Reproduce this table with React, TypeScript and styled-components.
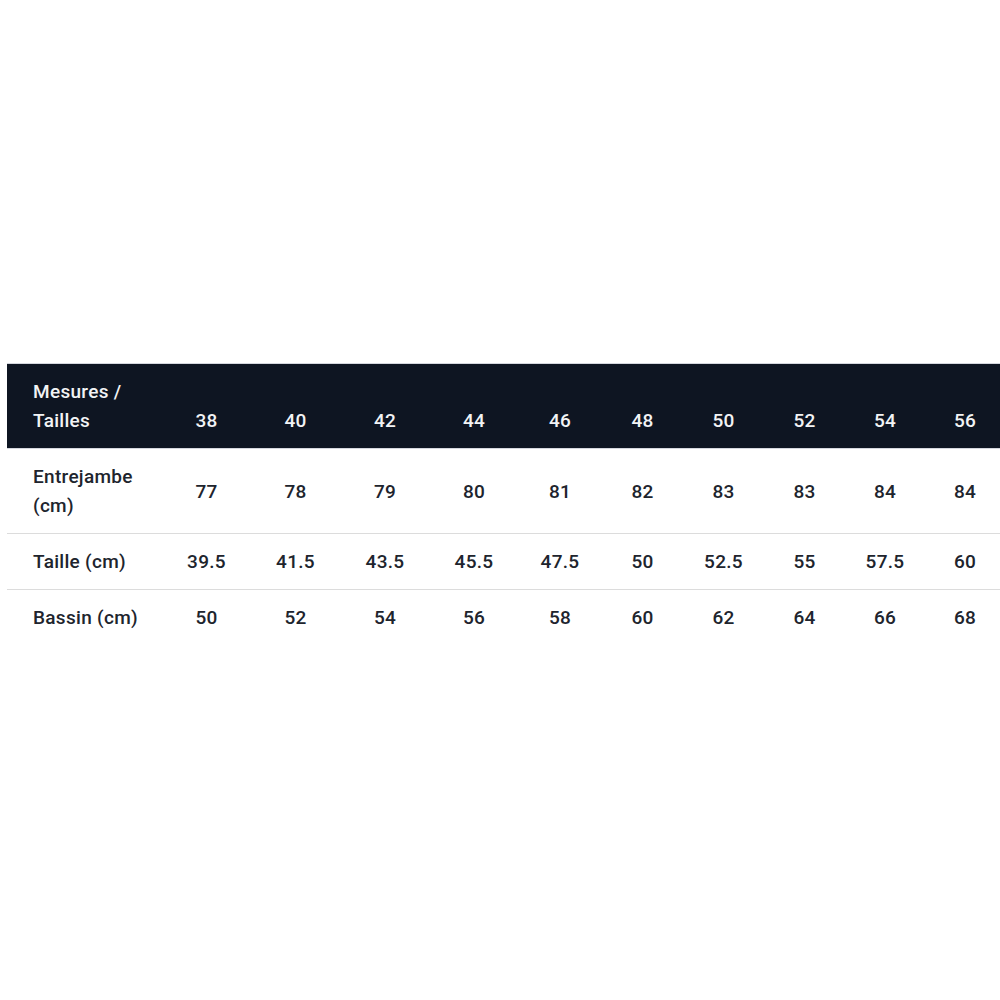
import styled, { createGlobalStyle } from "styled-components"

const GlobalStyle = createGlobalStyle`
  html, body {
    margin: 0;
    padding: 0;
    background: #ffffff;
    overflow: hidden;
  }
  body {
    font-family: Roboto, "Liberation Sans", Arial, sans-serif;
  }
`

const Page = styled.div`
  width: 1000px;
  height: 1000px;
  padding: 363px 0 0 7px;
  box-sizing: border-box;
  overflow: hidden;
`

const Table = styled.div`
  width: 998px;
  border-top: 1px solid #d4d7de;
`

const COLUMNS = "155px 89px 89px 90px 88px 84px 81px 81px 81px 80px 80px"

const Row = styled.div<{ $head?: boolean }>`
  display: grid;
  grid-template-columns: ${COLUMNS};
  background: ${({ $head }) => ($head ? "#0e1522" : "transparent")};
  color: ${({ $head }) => ($head ? "#f2f3f5" : "#20242d")};
  border-bottom: 1px solid ${({ $head }) => ($head ? "#d4d7de" : "#dcdcdc")};
  align-items: ${({ $head }) => ($head ? "end" : "center")};

  &:last-child {
    border-bottom: none;
  }
`

const Cell = styled.div<{ $label?: boolean }>`
  padding: 13px 0 13px ${({ $label }) => ($label ? "26px" : "0")};
  font-size: 19px;
  font-weight: 500;
  line-height: 29px;
  letter-spacing: 0.3px;
  text-align: ${({ $label }) => ($label ? "left" : "center")};
  white-space: nowrap;
`

const sizes = ["38", "40", "42", "44", "46", "48", "50", "52", "54", "56"]

const rows: { label: string[]; values: string[] }[] = [
  { label: ["Entrejambe", "(cm)"], values: ["77", "78", "79", "80", "81", "82", "83", "83", "84", "84"] },
  { label: ["Taille (cm)"], values: ["39.5", "41.5", "43.5", "45.5", "47.5", "50", "52.5", "55", "57.5", "60"] },
  { label: ["Bassin (cm)"], values: ["50", "52", "54", "56", "58", "60", "62", "64", "66", "68"] },
]

export default function App() {
  return (
    <>
      <GlobalStyle />
      <Page>
        <Table>
          <Row $head>
            <Cell $label>
              Mesures /<br />
              Tailles
            </Cell>
            {sizes.map((s) => (
              <Cell key={s}>{s}</Cell>
            ))}
          </Row>
          {rows.map((r) => (
            <Row key={r.label[0]}>
              <Cell $label>
                {r.label.map((l, i) => (
                  <span key={l}>
                    {i > 0 && <br />}
                    {l}
                  </span>
                ))}
              </Cell>
              {r.values.map((v, i) => (
                <Cell key={i}>{v}</Cell>
              ))}
            </Row>
          ))}
        </Table>
      </Page>
    </>
  )
}
